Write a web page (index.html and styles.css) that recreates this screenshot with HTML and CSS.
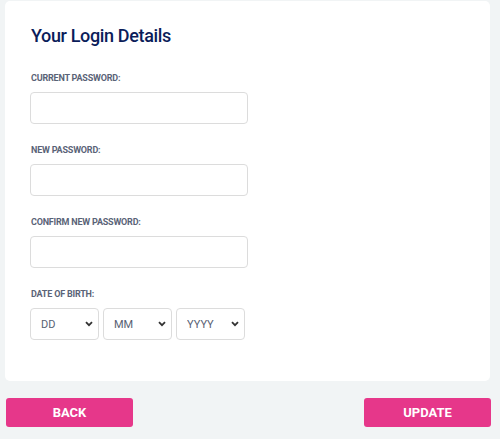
FILE: index.html
```html
<!DOCTYPE html>
<html lang="en">
<head>
<meta charset="utf-8">
<title>Your Login Details</title>
<link rel="stylesheet" href="styles.css">
</head>
<body>
<div class="page">
  <section class="card">
    <h1 class="title">Your Login Details</h1>
    <div class="field">
      <label class="label" for="cur">CURRENT PASSWORD:</label>
      <input class="input" id="cur" type="password">
    </div>
    <div class="field">
      <label class="label" for="new">NEW PASSWORD:</label>
      <input class="input" id="new" type="password">
    </div>
    <div class="field">
      <label class="label" for="conf">CONFIRM NEW PASSWORD:</label>
      <input class="input" id="conf" type="password">
    </div>
    <div class="field">
      <span class="label">DATE OF BIRTH:</span>
      <div class="dob">
        <div class="sel-wrap">
          <select class="select"><option>DD</option></select>
          <svg class="chev" viewBox="0 0 8 6" width="8" height="6"><path d="M1 1.2 L4 4.2 L7 1.2" fill="none" stroke="#333" stroke-width="1.8"/></svg>
        </div>
        <div class="sel-wrap">
          <select class="select"><option>MM</option></select>
          <svg class="chev" viewBox="0 0 8 6" width="8" height="6"><path d="M1 1.2 L4 4.2 L7 1.2" fill="none" stroke="#333" stroke-width="1.8"/></svg>
        </div>
        <div class="sel-wrap">
          <select class="select"><option>YYYY</option></select>
          <svg class="chev" viewBox="0 0 8 6" width="8" height="6"><path d="M1 1.2 L4 4.2 L7 1.2" fill="none" stroke="#333" stroke-width="1.8"/></svg>
        </div>
      </div>
    </div>
  </section>
  <div class="actions">
    <button class="btn" type="button">BACK</button>
    <button class="btn" type="button">UPDATE</button>
  </div>
</div>
</body>
</html>
```
FILE: styles.css
```css
* { box-sizing: border-box; }
html, body { margin: 0; padding: 0; }
body {
  background: #f1f4f5;
  font-family: Roboto, "Liberation Sans", Arial, sans-serif;
  width: 500px;
  height: 439px;
  overflow: hidden;
}
.page {
  padding: 1px 9px 0 5px;
}
.card {
  background: #ffffff;
  border-radius: 5px;
  width: 485px;
  height: 380px;
  padding: 23px 25px 0 25px;
}
.title {
  margin: 0 0 24px 1px;
  font-size: 18px;
  line-height: 24px;
  font-weight: 500;
  letter-spacing: -0.35px;
  color: #0b1d5a;
}
.field {
  display: flex;
  flex-direction: column;
  align-items: flex-start;
  margin-bottom: 20px;
}
.label {
  font-size: 9px;
  line-height: 12px;
  font-weight: 700;
  color: #5a6377;
  margin: 0 0 8px 1px;
  letter-spacing: -0.2px;
}
.input {
  width: 218px;
  height: 32px;
  border: 1px solid #dcdcdc;
  border-radius: 4px;
  background: #fff;
  margin: 0;
  outline: none;
}
.dob {
  display: flex;
  gap: 4px;
}
.sel-wrap {
  position: relative;
  width: 69px;
  height: 32px;
}
.select {
  appearance: none;
  -webkit-appearance: none;
  width: 100%;
  height: 100%;
  border: 1px solid #dcdcdc;
  border-radius: 4px;
  background: #fff;
  padding: 0 0 0 10px;
  font-family: Roboto, "Liberation Sans", Arial, sans-serif;
  font-size: 11px;
  color: #586173;
  margin: 0;
}
.chev {
  position: absolute;
  right: 6px;
  top: 13px;
  pointer-events: none;
}
.actions {
  display: flex;
  justify-content: space-between;
  margin: 17px 0 0 1px;
}
.btn {
  width: 127px;
  height: 29px;
  border: 0;
  border-radius: 3px;
  background: #e6378a;
  color: #ffffff;
  font-family: Roboto, "Liberation Sans", Arial, sans-serif;
  font-size: 13px;
  font-weight: 700;
  padding: 0;
}
```
